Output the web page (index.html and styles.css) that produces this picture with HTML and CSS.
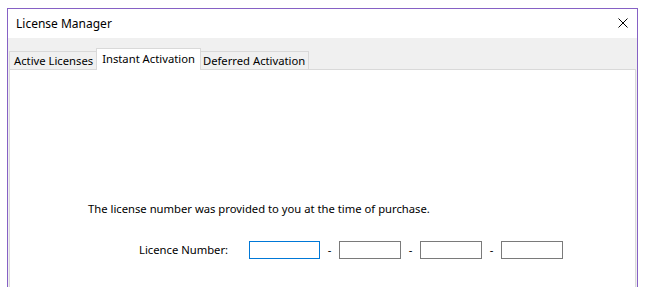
FILE: index.html
```html
<!DOCTYPE html>
<html>
<head>
<meta charset="utf-8">
<link rel="stylesheet" href="styles.css">
</head>
<body>
<div class="window">
  <div class="titlebar">
    <span class="title">License Manager</span>
    <svg class="close" width="10" height="10" viewBox="0 0 10 10"><path d="M0.5 0.5 L9.5 9.5 M9.5 0.5 L0.5 9.5" stroke="#000" stroke-width="1" fill="none"/></svg>
  </div>
  <div class="body">
    <div class="tabs">
      <div class="tab first">Active Licenses</div>
      <div class="tab selected">Instant Activation</div>
      <div class="tab last">Deferred Activation</div>
    </div>
    <div class="panel">
      <p class="info">The license number was provided to you at the time of purchase.</p>
      <div class="row">
        <span class="label">Licence Number:</span>
        <input class="field focus" type="text">
        <span class="sep">-</span>
        <input class="field" type="text">
        <span class="sep">-</span>
        <input class="field" type="text">
        <span class="sep">-</span>
        <input class="field" type="text">
      </div>
    </div>
  </div>
</div>
</body>
</html>
```
FILE: styles.css
```css
html, body {
  margin: 0;
  padding: 0;
  background: #fff;
  height: 100%;
  overflow: hidden;
}
body {
  font-family: "Noto Sans", "Open Sans", sans-serif;
  font-size: 11.25px;
  color: #000;
}
.window {
  margin: 8px 0 0 7px;
  width: 629px;
  height: 279px;
  border: 1px solid #8661c5;
  border-bottom: none;
  display: flex;
  flex-direction: column;
}
.titlebar {
  height: 29px;
  background: #fff;
  display: flex;
  align-items: center;
  justify-content: space-between;
  padding: 0 9px 0 8px;
}
.title {
  font-size: 12px;
  line-height: 16px;
  margin-top: 1px;
}
.close {
  display: block;
  margin-top: -1px;
}
.body {
  flex: 1;
  background: #f0f0f0;
  padding: 11px 1px 0 1px;
  display: flex;
  flex-direction: column;
}
.tabs {
  display: flex;
  align-items: flex-end;
  height: 20px;
  position: relative;
  z-index: 1;
}
.tab {
  height: 17px;
  line-height: 18px;
  padding: 0 3px 0 4px;
  border: 1px solid #d9d9d9;
  border-bottom: none;
  background: #f0f0f0;
  white-space: nowrap;
}
.tab.selected {
  height: 21px;
  margin-bottom: -1px;
  background: #fff;
  padding: 0 5px 0 5px;
  line-height: 20px;
}
.tab.last {
  padding: 0 3px 0 2px;
}
.tab + .tab {
  margin-left: -1px;
}
.panel {
  flex: 1;
  background: #fff;
  border: 1px solid #d9d9d9;
  border-bottom: none;
  padding-top: 131px;
}
.info {
  margin: 0 0 24px 78px;
  line-height: 16px;
}
.row {
  display: flex;
  align-items: center;
  height: 18px;
}
.label {
  margin-left: 129px;
  width: 110px;
  line-height: 16px;
}
.field {
  box-sizing: border-box;
  width: 62px;
  height: 18px;
  border: 1px solid #7a7a7a;
  margin: 0;
  padding: 0;
  background: #fff;
  outline: none;
}
.field.focus {
  width: 71px;
  border-color: #0078d7;
}
.sep {
  width: 19px;
  text-align: center;
  line-height: 16px;
}
```
